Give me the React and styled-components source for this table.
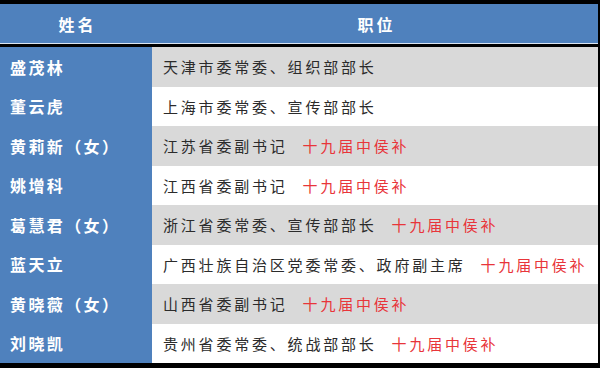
import React from "react";
import styled, { createGlobalStyle } from "styled-components";

const GlobalStyle = createGlobalStyle`
  html, body {
    margin: 0;
    padding: 0;
    background: #000;
  }
  body {
    font-family: "Noto Sans CJK SC", "Noto Sans", sans-serif;
  }
`;

const Frame = styled.div`
  width: 600px;
  height: 368px;
  box-sizing: border-box;
  padding: 4px 2px 5px 0;
  background: #000;
  display: flex;
  flex-direction: column;
`;

const Header = styled.div`
  display: grid;
  grid-template-columns: 152px 1fr;
  height: 39px;
  background: #4f81bd;
  border-bottom: 1px solid #dbe5f1;
  margin-bottom: 3px;
`;

const HeadCell = styled.div`
  display: flex;
  align-items: center;
  justify-content: center;
  color: #fff;
  font-size: 16px;
  font-weight: 700;
  letter-spacing: 3px;
  padding-left: 3px;
`;

const Body = styled.div`
  display: grid;
  grid-template-columns: 152px 1fr;
  grid-template-rows: repeat(8, 1fr);
  height: 316px;
`;

const NameCell = styled.div`
  display: flex;
  align-items: center;
  background: #4f81bd;
  color: #fff;
  font-size: 16px;
  font-weight: 700;
  letter-spacing: 2.4px;
  padding-left: 10px;
  white-space: nowrap;
`;

const PostCell = styled.div`
  display: flex;
  align-items: center;
  background: ${({ $shade }) => ($shade ? "#d9d9d9" : "#ffffff")};
  color: #2b2b2b;
  font-size: 15px;
  letter-spacing: 2.8px;
  padding-left: 11px;
  white-space: nowrap;
`;

const Note = styled.span`
  color: #e8353a;
  margin-left: 15px;
`;

const rows = [
  { name: "盛茂林", post: "天津市委常委、组织部部长" },
  { name: "董云虎", post: "上海市委常委、宣传部部长" },
  { name: "黄莉新（女）", post: "江苏省委副书记", note: true },
  { name: "姚增科", post: "江西省委副书记", note: true },
  { name: "葛慧君（女）", post: "浙江省委常委、宣传部部长", note: true },
  { name: "蓝天立", post: "广西壮族自治区党委常委、政府副主席", note: true },
  { name: "黄晓薇（女）", post: "山西省委副书记", note: true },
  { name: "刘晓凯", post: "贵州省委常委、统战部部长", note: true },
];

const Row = ({ name, post, note, shade }) => (
  <>
    <NameCell>{name}</NameCell>
    <PostCell $shade={shade}>
      {post}
      {note && <Note>十九届中侯补</Note>}
    </PostCell>
  </>
);

export default function App() {
  return (
    <>
      <GlobalStyle />
      <Frame>
        <Header>
          <HeadCell>姓名</HeadCell>
          <HeadCell>职位</HeadCell>
        </Header>
        <Body>
          {rows.map((r, i) => (
            <Row key={r.name} {...r} shade={i % 2 === 0} />
          ))}
        </Body>
      </Frame>
    </>
  );
}
